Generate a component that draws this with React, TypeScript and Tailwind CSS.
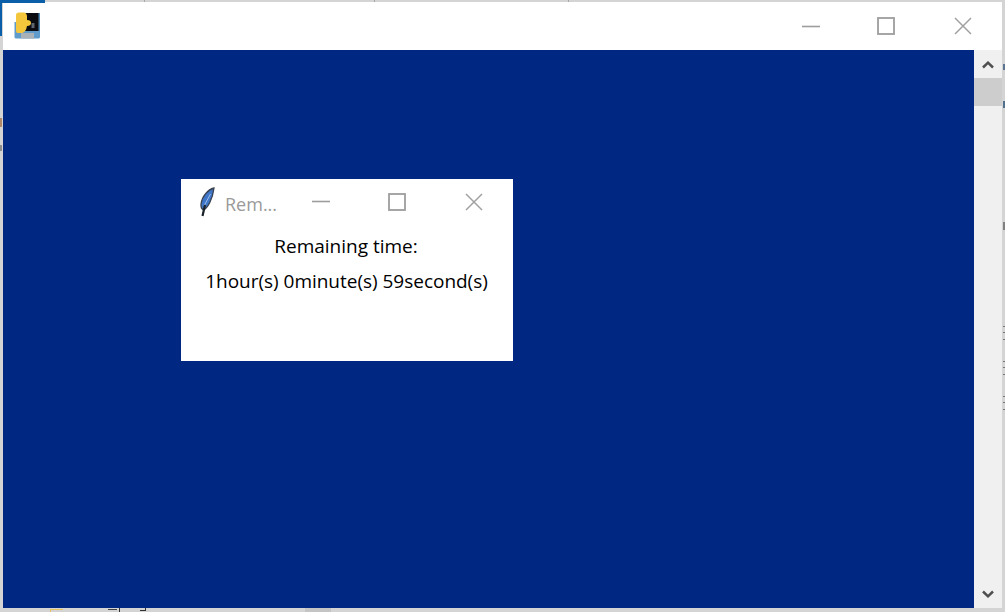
const Minimize = () => (
  <svg width="18" height="3" viewBox="0 0 18 3"><path d="M0 1.5H18" stroke="#9d9d9d" strokeWidth="1.6" /></svg>
);
const Maximize = () => (
  <svg width="18" height="18" viewBox="0 0 18 18"><rect x="1" y="1" width="16" height="16" fill="none" stroke="#9d9d9d" strokeWidth="1.8" /></svg>
);
const Close = () => (
  <svg width="18" height="18" viewBox="0 0 18 18"><path d="M1 1L17 17M17 1L1 17" stroke="#a0a0a0" strokeWidth="1.5" /></svg>
);
const Chevron = ({ down }: { down?: boolean }) => (
  <svg width="12" height="8" viewBox="0 0 12 8">
    <path d={down ? "M1 1.5L6 6.3L11 1.5" : "M1 6.5L6 1.7L11 6.5"} fill="none" stroke="#4f4f4f" strokeWidth="2.5" />
  </svg>
);
const AppIcon = () => (
  <svg width="27" height="27" viewBox="0 0 27 27" className="blur-[0.6px]">
    <path d="M0.5 10H26V25Q26 26.5 24.5 26.5H2Q0.5 26.5 0.5 25Z" fill="#5f9ccb" />
    <rect x="10" y="1" width="15" height="18" fill="#0b0b12" />
    <rect x="24.5" y="1" width="1.5" height="18" fill="#4f87b5" />
    <rect x="7" y="21" width="13" height="5.5" fill="#aab2b8" />
    <path d="M2 3Q2 0.5 5 0.5H10Q12.5 0.5 13 4V8Q17 8 17 11Q17 14 13 14Q12 20 8 21H3.5Q2 21 2 18Z" fill="#f4c63c" />
    <rect x="17.5" y="11" width="3" height="5" fill="#5d666e" />
  </svg>
);
const Feather = () => (
  <svg width="20" height="30" viewBox="0 0 20 30" className="blur-[0.4px]">
    <path d="M17 1C11 2.5 5 9 4 17C3.7 20 4.5 22 6.5 23C10.5 21 15.5 13 17 1Z" fill="#3f76c8" stroke="#3a4250" strokeWidth="1.3" />
    <path d="M13.5 7L7 19" stroke="#a8c4e8" strokeWidth="0.9" />
    <path d="M8 18L5.5 29" stroke="#1b2229" strokeWidth="2.2" />
  </svg>
);

const marks = [
  "left-[144px] top-0 w-[1px] h-[2px] bg-[#a8a8a8]",
  "left-[374px] top-0 w-[1px] h-[2px] bg-[#a8a8a8]",
  "left-[568px] top-0 w-[1px] h-[2px] bg-[#a8a8a8]",
  "left-[0px] top-[118px] w-[2px] h-[9px] bg-[#b08a68]",
  "left-[0px] top-[145px] w-[2px] h-[6px] bg-[#8d8d8d]",
  "left-[1003px] top-[64px] w-[2px] h-[6px] bg-[#5d7590]",
  "left-[1003px] top-[101px] w-[2px] h-[7px] bg-[#50708c]",
  "left-[1003px] top-[222px] w-[2px] h-[8px] bg-[#808080]",
  "left-[1003px] top-[326px] w-[2px] h-[1px] bg-[#777777]",
  "left-[1003px] top-[332px] w-[2px] h-[1px] bg-[#777777]",
  "left-[1003px] top-[339px] w-[2px] h-[1px] bg-[#777777]",
  "left-[1003px] top-[361px] w-[2px] h-[1px] bg-[#777777]",
  "left-[1003px] top-[367px] w-[2px] h-[1px] bg-[#777777]",
  "left-[1003px] top-[374px] w-[2px] h-[1px] bg-[#777777]",
  "left-[1003px] top-[396px] w-[2px] h-[1px] bg-[#777777]",
  "left-[1003px] top-[402px] w-[2px] h-[1px] bg-[#777777]",
  "left-[1003px] top-[409px] w-[2px] h-[1px] bg-[#777777]",
  "left-[50px] top-[609px] w-[13px] h-[1px] bg-[#e8c25c]",
  "left-[50px] top-[609px] w-[1px] h-[3px] bg-[#e8c25c]",
  "left-[108px] top-[609px] w-[9px] h-[1px] bg-[#444444]",
  "left-[119px] top-[608px] w-[1px] h-[4px] bg-[#333333]",
  "left-[140px] top-[610px] w-[6px] h-[1px] bg-[#333333]",
  "left-[145px] top-[608px] w-[1px] h-[3px] bg-[#333333]",
  "left-[305px] top-[608px] w-[26px] h-[4px] bg-[#c4c4c4]",
];

export default function App() {
  return (
    <div className="relative w-[1005px] h-[612px] overflow-hidden bg-[#d4d4d4] pt-[2px] pl-[3px] pr-[3px] pb-[4px] font-['Open_Sans','Noto_Sans',sans-serif]">
      <div className="absolute left-0 top-0 w-[45px] h-[3px] bg-[#0b5fa8]" />
      <div className="absolute left-0 top-0 w-[2px] h-[36px] bg-[#0b5fa8]" />
      {marks.map((m) => (
        <div key={m} className={`absolute ${m}`} />
      ))}
      <div className="flex flex-col w-full h-full">
        <div className="flex items-center h-[48px] bg-white shrink-0">
          <div className="ml-[11px] mt-[-2px]"><AppIcon /></div>
          <div className="ml-auto flex items-center">
            <Minimize />
            <div className="ml-[57px]"><Maximize /></div>
            <div className="ml-[59px] mr-[30px]"><Close /></div>
          </div>
        </div>
        <div className="flex flex-1 min-h-0">
          <div className="relative flex-1 bg-[#002781]">
            <div className="absolute left-[178px] top-[129px] w-[332px] h-[182px] bg-white flex flex-col">
              <div className="flex items-center h-[47px] shrink-0">
                <div className="ml-[16px] mt-[-1px]"><Feather /></div>
                <span className="ml-[8px] text-[18px] leading-[24px] text-[#9a9a9a] mt-[3px]">Rem...</span>
                <div className="ml-[35px] -mt-[2px]"><Minimize /></div>
                <div className="ml-[58px] -mt-[1px]"><Maximize /></div>
                <div className="ml-[59px] -mt-[1px]"><Close /></div>
              </div>
              <div className="flex flex-col items-center text-[19px] leading-[24px] text-black">
                <span className="-ml-[2px] mt-[8px]">Remaining time:</span>
                <span className="-ml-[1px] mt-[11px] tracking-[-0.02px]">1hour(s) 0minute(s) 59second(s)</span>
              </div>
            </div>
          </div>
          <div className="flex flex-col w-[28px] bg-[#f0f0f0] shrink-0">
            <div className="flex items-center justify-center h-[28px] shrink-0 pt-[2px]"><Chevron /></div>
            <div className="h-[28px] bg-[#cdcdcd] shrink-0" />
            <div className="flex-1" />
            <div className="flex items-center justify-center h-[28px] shrink-0"><Chevron down /></div>
          </div>
        </div>
      </div>
    </div>
  );
}
